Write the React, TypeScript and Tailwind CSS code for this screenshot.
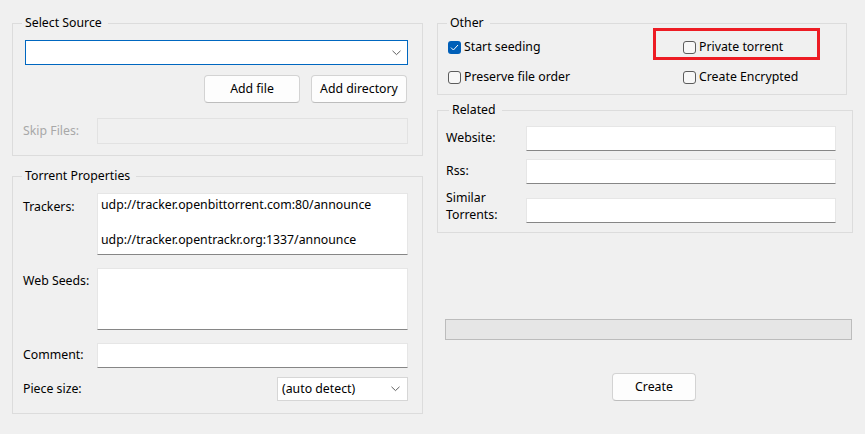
import React from "react";

const font = { fontFamily: '"Noto Sans", "Liberation Sans", sans-serif' };

function Chevron({ className = "" }: { className?: string }) {
  return (
    <svg width="9" height="6" viewBox="0 0 9 6" className={className}>
      <path d="M0.5 0.8 L4.5 4.6 L8.5 0.8" fill="none" stroke="#606060" strokeWidth="1" />
    </svg>
  );
}

function Check({ checked }: { checked?: boolean }) {
  return checked ? (
    <span className="w-[13px] h-[13px] rounded-[3px] bg-[#005fb8] flex items-center justify-center shrink-0">
      <svg width="9" height="7" viewBox="0 0 9 7">
        <path d="M1 3.6 L3.4 6 L8 1" fill="none" stroke="#ffffff" strokeWidth="1" />
      </svg>
    </span>
  ) : (
    <span className="w-[13px] h-[13px] rounded-[3px] border border-[#5c5c5c] bg-[#f7f7f7] shrink-0" />
  );
}

function Group({
  title,
  className = "",
  titleClass = "left-[9px]",
  children,
}: {
  title: string;
  className?: string;
  titleClass?: string;
  children: React.ReactNode;
}) {
  return (
    <div className={"relative border border-[#dcdcdc] " + className}>
      <span className={"absolute -top-[9px] bg-[#f0f0f0] pl-[3px] pr-[6px] leading-[16px] text-black " + titleClass}>
        {title}
      </span>
      {children}
    </div>
  );
}

function Field({ className = "", children }: { className?: string; children?: React.ReactNode }) {
  return (
    <div className={"bg-white border border-[#e6e6e6] border-b-[#868686] " + className}>{children}</div>
  );
}

function Button({ label, className = "" }: { label: string; className?: string }) {
  return (
    <div
      className={
        "h-[28px] rounded-[4px] border border-[#d3d3d3] border-b-[#bdbdbd] bg-[#fdfdfd] flex items-center justify-center text-black " +
        className
      }
    >
      {label}
    </div>
  );
}

export default function App() {
  return (
    <div className="w-[865px] h-[434px] bg-[#f0f0f0] flex pl-[12px] pt-[23px] text-[12.3px] text-black" style={font}>
      {/* Left column */}
      <div className="w-[411px] flex flex-col">
        <Group title="Select Source" className="h-[133px] pt-[16px] pl-[12px] pr-[14px]">
          <div className="h-[25px] border border-[#0067c0] bg-white flex items-center justify-end pr-[6px]">
            <Chevron />
          </div>
          <div className="flex justify-end gap-[11px] mt-[10px] pr-[1px]">
            <Button label="Add file" className="w-[96px]" />
            <Button label="Add directory" className="w-[96px]" />
          </div>
          <div className="flex items-center mt-[15px] -ml-[2px]">
            <span className="w-[74px] text-[#a8a8a8]">Skip Files:</span>
            <div className="flex-1 h-[26px] border border-[#e2e2e2] bg-[#f0f0f0]" />
          </div>
        </Group>

        <Group title="Torrent Properties" className="h-[238px] mt-[20px] pt-[16px] pl-[10px] pr-[14px]">
          <div className="flex">
            <span className="w-[74px] mt-[5px]">Trackers:</span>
            <Field className="flex-1 h-[62px] pl-[3px] pt-[2px] leading-[17px] whitespace-nowrap overflow-hidden">
              <div>udp://tracker.openbittorrent.com:80/announce</div>
              <div className="mt-[18px]">udp://tracker.opentrackr.org:1337/announce</div>
            </Field>
          </div>
          <div className="flex mt-[13px]">
            <span className="w-[74px] mt-[4px]">Web Seeds:</span>
            <Field className="flex-1 h-[62px]" />
          </div>
          <div className="flex items-center mt-[13px]">
            <span className="w-[74px]">Comment:</span>
            <Field className="flex-1 h-[25px]" />
          </div>
          <div className="flex items-center mt-[9px]">
            <span className="flex-1">Piece size:</span>
            <div className="w-[131px] h-[24px] border border-[#d6d6d6] bg-white flex items-center justify-between pl-[4px] pr-[7px]">
              <span>(auto detect)</span>
              <Chevron />
            </div>
          </div>
        </Group>
      </div>

      {/* Right column */}
      <div className="w-[416px] ml-[14px] flex flex-col">
        <Group title="Other" className="w-[410px] h-[72px] pt-[14px] pl-[10px]">
          <div className="flex h-[18px] items-center">
            <div className="w-[235px] flex items-center gap-[3px]">
              <Check checked />
              <span>Start seeding</span>
            </div>
            <div className="flex items-center gap-[3px]">
              <Check />
              <span>Private torrent</span>
            </div>
          </div>
          <div className="flex h-[18px] items-center mt-[12px]">
            <div className="w-[235px] flex items-center gap-[3px]">
              <Check />
              <span>Preserve file order</span>
            </div>
            <div className="flex items-center gap-[3px]">
              <Check />
              <span>Create Encrypted</span>
            </div>
          </div>
          <div className="absolute left-[215px] top-[4px] w-[167px] h-[32px] border-[3px] border-[#ed1c24]" />
        </Group>

        <Group title="Related" titleClass="left-[11px]" className="h-[123px] mt-[15px] pt-[15px] pl-[8px] pr-[16px]">
          <div className="flex items-center">
            <span className="w-[80px]">Website:</span>
            <Field className="flex-1 h-[25px]" />
          </div>
          <div className="flex items-center mt-[8px]">
            <span className="w-[80px]">Rss:</span>
            <Field className="flex-1 h-[25px]" />
          </div>
          <div className="flex items-end h-[25px] mt-[14px]">
            <span className="w-[80px] shrink-0 leading-[17px]">
              Similar
              <br />
              Torrents:
            </span>
            <Field className="flex-1 h-[25px]" />
          </div>
        </Group>

        <div className="ml-[8px] mt-[86px] w-[407px] h-[21px] border border-[#bcbcbc] bg-[#e6e6e6]" />
        <Button label="Create" className="ml-[175px] mt-[33px] w-[84px]" />
      </div>
    </div>
  );
}
